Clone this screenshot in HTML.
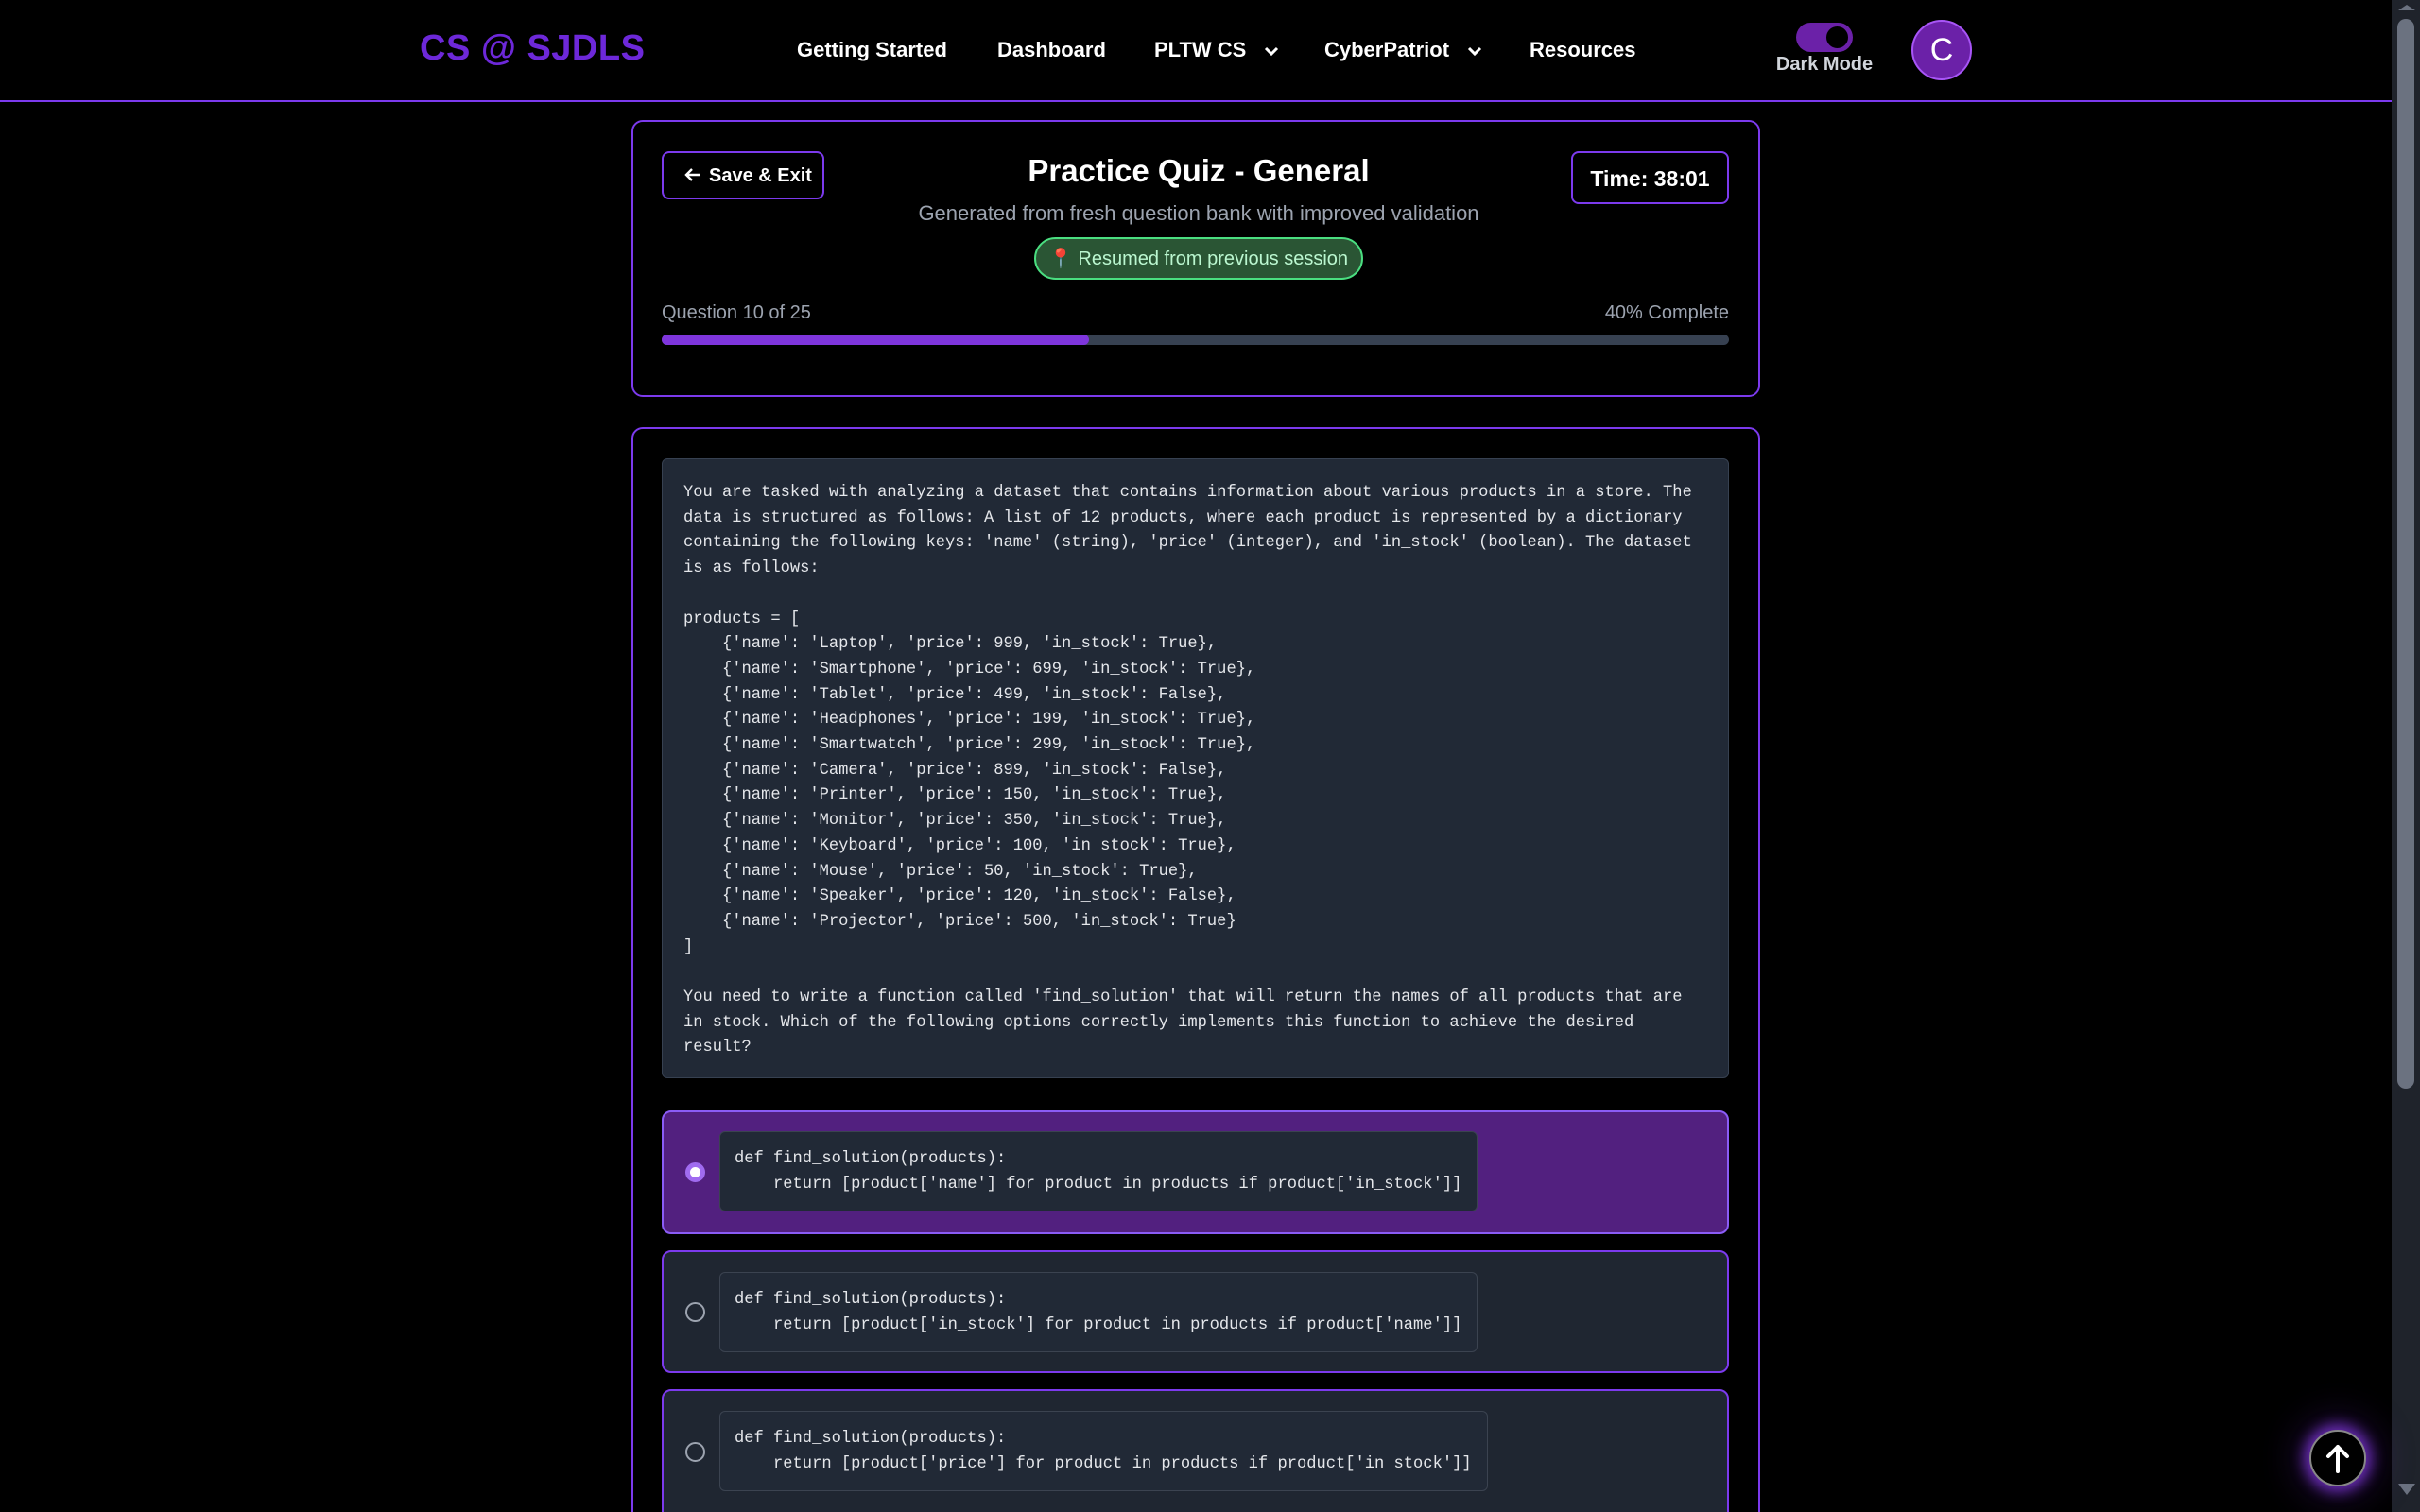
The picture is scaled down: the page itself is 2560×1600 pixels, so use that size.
<!DOCTYPE html>
<html style="height:1600px;overflow:hidden"><head><meta charset="utf-8"><style>
*{box-sizing:border-box;margin:0;padding:0}
body{width:2560px;height:1600px;background:#000;overflow:hidden;position:relative;font-family:"Liberation Sans",sans-serif;color:#fff}
.a{position:absolute}
.nav{font-weight:bold;font-size:22px;top:40px;color:#fff}
.mono{font-family:"Liberation Mono",monospace;font-size:17.1px;line-height:26.7px;color:#e5e7eb;white-space:pre}
.opt{position:absolute;left:700px;width:1129px;border:2px solid #7c3aed;border-radius:10px;background:#1f2631}
.code{position:absolute;left:59px;background:#212936;border:1px solid #3b4350;border-radius:6px;padding:16px 16px 14px 15px}
.radio{position:absolute;left:23px;width:21px;height:21px;border-radius:50%;border:2px solid #9ca3af}
</style></head><body>
<div class="a" style="left:444px;top:30px;font-size:38px;font-weight:900;color:#6d28d9;letter-spacing:0.5px">CS @ SJDLS</div>
<div class="a nav" style="left:843px">Getting Started</div>
<div class="a nav" style="left:1055px">Dashboard</div>
<div class="a nav" style="left:1221px">PLTW CS <svg width="18" height="12" viewBox="0 0 18 12" style="margin-left:12px"><path d="M3 3l6 6 6-6" stroke="#fff" stroke-width="3" fill="none"/></svg></div>
<div class="a nav" style="left:1401px">CyberPatriot <svg width="18" height="12" viewBox="0 0 18 12" style="margin-left:12px"><path d="M3 3l6 6 6-6" stroke="#fff" stroke-width="3" fill="none"/></svg></div>
<div class="a nav" style="left:1618px">Resources</div>
<div class="a" style="left:1900px;top:24px;width:60px;height:31px;border-radius:16px;background:#6b21a8"></div>
<div class="a" style="left:1929px;top:25px;width:29px;height:29px;border-radius:50%;background:#000;border:3px solid #6b21a8"></div>
<div class="a" style="left:1870px;top:57px;width:120px;text-align:center;font-size:20px;font-weight:bold;color:#d1d5db">Dark Mode</div>
<div class="a" style="left:2022px;top:21px;width:64px;height:64px;border-radius:50%;background:#6b21a8;border:2px solid #a855f7;text-align:center;line-height:60px;font-size:34px;color:#fff">C</div>
<div class="a" style="left:0;top:106px;width:2530px;height:2px;background:#7c3aed"></div>
<div class="a" style="left:2530px;top:0;width:30px;height:1600px;background:#1f232b"></div>
<div class="a" style="left:2536px;top:20px;width:18px;height:1132px;border-radius:9px;background:#6b7280"></div>
<div class="a" style="left:2537px;top:1570px;width:0;height:0;border-left:9px solid transparent;border-right:9px solid transparent;border-top:12px solid #6b7280"></div>
<div class="a" style="left:2537px;top:5px;width:0;height:0;border-left:9px solid transparent;border-right:9px solid transparent;border-bottom:6px solid #6b7280"></div>
<div class="a" style="left:668px;top:127px;width:1194px;height:293px;border:2px solid #7c3aed;border-radius:12px"></div>
<div class="a" style="left:700px;top:160px;width:172px;height:51px;border:2px solid #7c3aed;border-radius:8px;font-size:20px;font-weight:bold;line-height:49px;padding-left:22px">
<svg width="18" height="16" viewBox="0 0 18 16" style="vertical-align:-1px;margin-right:8px"><path d="M16 8H3M8 2L2 8l6 6" stroke="#fff" stroke-width="2.4" fill="none"/></svg>Save &amp; Exit</div>
<div class="a" style="left:868px;top:162px;width:800px;text-align:center;font-size:33px;font-weight:bold">Practice Quiz - General</div>
<div class="a" style="left:868px;top:213px;width:800px;text-align:center;font-size:22px;color:#9ca3af">Generated from fresh question bank with improved validation</div>
<div class="a" style="left:1094px;top:251px;width:348px;height:45px;border-radius:23px;background:#2a5534;border:2px solid #4ade80;color:#bbf7d0;font-size:20px;line-height:43px;text-align:center">📍 Resumed from previous session</div>
<div class="a" style="left:1662px;top:160px;width:167px;height:56px;border:2px solid #7c3aed;border-radius:8px;text-align:center;line-height:54px;font-size:23px;font-weight:bold">Time: 38:01</div>
<div class="a" style="left:700px;top:320px;font-size:20px;color:#9ca3af">Question 10 of 25</div>
<div class="a" style="left:600px;top:320px;width:1229px;text-align:right;font-size:20px;color:#9ca3af">40% Complete</div>
<div class="a" style="left:700px;top:354px;width:1129px;height:11px;border-radius:6px;background:#374151"></div>
<div class="a" style="left:700px;top:354px;width:452px;height:11px;border-radius:6px;background:#7e35dc"></div>
<div class="a" style="left:668px;top:452px;width:1194px;height:1200px;border:2px solid #7c3aed;border-radius:12px"></div>
<div class="a" style="left:700px;top:485px;width:1129px;height:656px;background:#212936;border:1px solid #374151;border-radius:6px"></div>
<div class="a mono" style="left:723px;top:509px">You are tasked with analyzing a dataset that contains information about various products in a store. The
data is structured as follows: A list of 12 products, where each product is represented by a dictionary
containing the following keys: 'name' (string), 'price' (integer), and 'in_stock' (boolean). The dataset
is as follows:

products = [
    {'name': 'Laptop', 'price': 999, 'in_stock': True},
    {'name': 'Smartphone', 'price': 699, 'in_stock': True},
    {'name': 'Tablet', 'price': 499, 'in_stock': False},
    {'name': 'Headphones', 'price': 199, 'in_stock': True},
    {'name': 'Smartwatch', 'price': 299, 'in_stock': True},
    {'name': 'Camera', 'price': 899, 'in_stock': False},
    {'name': 'Printer', 'price': 150, 'in_stock': True},
    {'name': 'Monitor', 'price': 350, 'in_stock': True},
    {'name': 'Keyboard', 'price': 100, 'in_stock': True},
    {'name': 'Mouse', 'price': 50, 'in_stock': True},
    {'name': 'Speaker', 'price': 120, 'in_stock': False},
    {'name': 'Projector', 'price': 500, 'in_stock': True}
]

You need to write a function called 'find_solution' that will return the names of all products that are
in stock. Which of the following options correctly implements this function to achieve the desired
result?</div>
<div class="opt" style="top:1175px;height:131px;background:#52207f;border-color:#8b5cf6">
<div class="radio" style="top:53px;border:5px solid #a06bf0;background:#fff"></div>
<div class="code" style="top:20px"><div class="mono">def find_solution(products):
    return [product['name'] for product in products if product['in_stock']]</div></div></div>
<div class="opt" style="top:1323px;height:130px">
<div class="radio" style="top:53px"></div>
<div class="code" style="top:21px"><div class="mono">def find_solution(products):
    return [product['in_stock'] for product in products if product['name']]</div></div></div>
<div class="opt" style="top:1470px;height:160px">
<div class="radio" style="top:54px"></div>
<div class="code" style="top:21px"><div class="mono">def find_solution(products):
    return [product['price'] for product in products if product['in_stock']]</div></div></div>
<div class="a" style="left:2443px;top:1513px;width:60px;height:60px;border-radius:50%;background:#000;border:2px solid #888;box-shadow:0 0 14px 6px rgba(139,60,240,.7),0 0 40px 14px rgba(110,40,200,.25)">
<svg width="56" height="56" viewBox="0 0 56 56"><path d="M28 42V16M18 26l10-10 10 10" stroke="#fff" stroke-width="4" stroke-linecap="round" stroke-linejoin="round" fill="none"/></svg></div>
</body></html>
